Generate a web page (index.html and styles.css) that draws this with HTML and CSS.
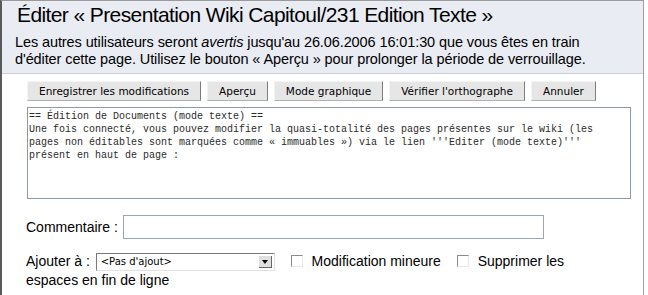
FILE: index.html
```html
<!DOCTYPE html>
<html lang="fr">
<head>
  <meta charset="UTF-8">
  <title>Éditer « Presentation Wiki Capitoul/231 Edition Texte »</title>
  <link rel="stylesheet" href="styles.css">
</head>
<body>

<div class="frame">
  <div class="header">
    <h1>Éditer « Presentation Wiki Capitoul/231 Edition Texte »</h1>
    <p class="notice">Les autres utilisateurs seront <em>avertis</em> jusqu'au 26.06.2006 16:01:30 que vous êtes en train d'éditer cette page. Utilisez le bouton « Aperçu » pour prolonger la période de verrouillage.</p>
  </div>

  <form class="editor">
    <div class="toolbar">
      <button type="button">Enregistrer les modifications</button>
      <button type="button">Aperçu</button>
      <button type="button">Mode graphique</button>
      <button type="button">Vérifier l'orthographe</button>
      <button type="button">Annuler</button>
    </div>

<textarea class="source" spellcheck="false">== Édition de Documents (mode texte) ==
Une fois connecté, vous pouvez modifier la quasi-totalité des pages présentes sur le wiki (les pages non éditables sont marquées comme « immuables ») via le lien '''Editer (mode texte)''' présent en haut de page :</textarea>

    <div class="comment-row">
      <label>Commentaire :</label>
      <input type="text" class="comment">
    </div>

    <div class="options">
      <label>Ajouter à :</label>
      <span class="select">
        <span class="select-value">&lt;Pas d'ajout&gt;</span>
        <span class="select-arrow"></span>
      </span>
      <span class="check"></span><span class="opt">Modification mineure</span>
      <span class="check"></span><span class="opt">Supprimer les espaces en fin de ligne</span>
    </div>
  </form>
</div>

</body>
</html>
```

FILE: styles.css
```css
body {
  margin: 0;
  background: #fff;
  font-family: "Liberation Sans", Arial, sans-serif;
  color: #000;
}
.frame {
  width: 641px;
  height: 294px;
  border-top: 1px solid #9a9a9a;
  border-left: 2px solid #5a5a5a;
  border-right: 1px solid #a0a0a0;
  overflow: hidden;
}
.header {
  background-color: #e9ecf3;
  border-bottom: 1px solid #c9ccd3;
  padding: 1px 14px 8px 13px;
  height: 63px;
}
h1 {
  margin: 0 0 0 2px;
  font-size: 21px;
  font-weight: normal;
  line-height: 26px;
  letter-spacing: -0.6px;
}
.notice {
  margin: 6px 0 0 0;
  font-size: 14.5px;
  line-height: 17px;
  letter-spacing: -0.1px;
}
.editor {
  padding: 7px 0 0 25px;
}
.toolbar {
  display: flex;
  gap: 6px;
}
button {
  font-family: "DejaVu Sans", Verdana, sans-serif;
  font-size: 10.5px;
  height: 20px;
  padding: 0 11px;
  background-color: #e6e6e6;
  border: 1px solid;
  border-color: #f4f4f4 #7c7c7c #b0b0b0 #f4f4f4;
  color: #000;
}
.source {
  display: block;
  box-sizing: border-box;
  width: 604px;
  height: 92px;
  margin-top: 6px;
  padding: 2px 1px;
  border: 1px solid #8d9aa6;
  font-family: "Liberation Mono", "Courier New", monospace;
  font-size: 10px;
  line-height: 13px;
  color: #2a2a2a;
  resize: none;
}
.comment-row {
  display: flex;
  align-items: center;
  margin: 16px 0 0 -1px;
  font-size: 14px;
}
.comment {
  box-sizing: border-box;
  width: 421px;
  height: 24px;
  margin-left: 5px;
  border: 1px solid #9aa6b2;
}
.options {
  margin: 13px 0 0 -1px;
  font-size: 14px;
  line-height: 19px;
  width: 580px;
}
.select {
  display: inline-flex;
  vertical-align: middle;
  box-sizing: border-box;
  width: 179px;
  height: 18px;
  margin-left: 2px;
  border: 1px solid;
  border-color: #7a7a7a #e0e0e0 #e0e0e0 #7a7a7a;
  background: #fff;
}
.select-value {
  flex: 1;
  font-family: "DejaVu Sans", Verdana, sans-serif;
  font-size: 10px;
  line-height: 16px;
  padding-left: 4px;
}
.select-arrow {
  width: 13px;
  height: 12px;
  margin: 2px 2px 0 0;
  background: #e0e0e0;
  border-right: 1px solid #666;
  border-bottom: 1px solid #666;
  box-sizing: border-box;
  position: relative;
}
.select-arrow::after {
  content: "";
  position: absolute;
  left: 3px;
  top: 4px;
  border-left: 3px solid transparent;
  border-right: 3px solid transparent;
  border-top: 4px solid #000;
}
.check {
  display: inline-block;
  box-sizing: border-box;
  width: 12px;
  height: 12px;
  margin: 0 9px 0 12px;
  vertical-align: -1px;
  border: 1px solid;
  border-color: #8a8a8a #e8e8e8 #e8e8e8 #8a8a8a;
  background: #fff;
}
```
